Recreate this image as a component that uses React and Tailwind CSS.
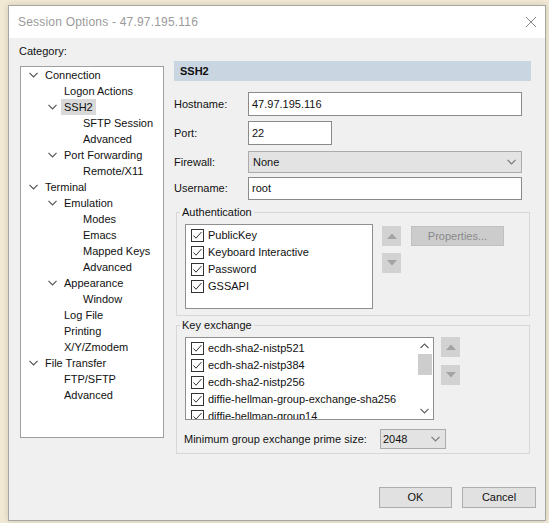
import React from "react";

const tree = [
  [0, "Connection", true],
  [1, "Logon Actions"],
  [1, "SSH2", true, true],
  [2, "SFTP Session"],
  [2, "Advanced"],
  [1, "Port Forwarding", true],
  [2, "Remote/X11"],
  [0, "Terminal", true],
  [1, "Emulation", true],
  [2, "Modes"],
  [2, "Emacs"],
  [2, "Mapped Keys"],
  [2, "Advanced"],
  [1, "Appearance", true],
  [2, "Window"],
  [1, "Log File"],
  [1, "Printing"],
  [1, "X/Y/Zmodem"],
  [0, "File Transfer", true],
  [1, "FTP/SFTP"],
  [1, "Advanced"],
];

const indent = ["pl-[8px]", "pl-[27px]", "pl-[46px]"];

function Chevron({ color = "#555" }) {
  return (
    <svg width="9" height="6" viewBox="0 0 9 6">
      <polyline points="0.5,0.8 4.5,4.8 8.5,0.8" fill="none" stroke={color} strokeWidth="1.2" />
    </svg>
  );
}

function Check() {
  return (
    <svg width="13" height="13" viewBox="0 0 13 13" className="shrink-0">
      <rect x="0.5" y="0.5" width="12" height="12" fill="#fff" stroke="#333" />
      <polyline points="2.5,6.5 5,9.2 10.5,3" fill="none" stroke="#333" strokeWidth="1" />
    </svg>
  );
}

function Row({ label }) {
  return (
    <div className="flex items-center h-[17px] pl-[5px] gap-[4px] whitespace-nowrap">
      <Check />
      <span>{label}</span>
    </div>
  );
}

function ArrowBtn({ up }) {
  return (
    <div className="w-[19px] h-[20px] bg-[#d2d2d2] flex items-center justify-center">
      <svg width="10" height="6" viewBox="0 0 10 6">
        {up ? (
          <polygon points="0,6 5,0.5 10,6" fill="#a3a3a3" />
        ) : (
          <polygon points="0,0 5,5.5 10,0" fill="#a3a3a3" />
        )}
      </svg>
    </div>
  );
}

function Input({ value, w }) {
  return (
    <div className={`${w} h-full bg-white border border-[#8a8a8a] flex items-center pl-[3px]`}>
      {value}
    </div>
  );
}

export default function App() {
  return (
    <div className="w-[549px] h-[523px] bg-[#f1e9d3] pt-[5px] pl-[8px] font-['Liberation_Sans',Arial,sans-serif] text-[11px] text-[#111]">
      <div className="w-[538px] h-[516px] border border-[#a6a6a6] flex flex-col shadow-[0_0_6px_rgba(0,0,0,0.15)]">
        {/* title bar */}
        <div className="h-[32px] bg-white flex items-center justify-between pl-[9px] pr-[8px]">
          <span className="text-[12px] text-[#9b9b9b] tracking-[0.2px]">Session Options - 47.97.195.116</span>
          <svg width="12" height="12" viewBox="0 0 12 12">
            <path d="M1 1 L11 11 M11 1 L1 11" stroke="#8c8c8c" strokeWidth="1" />
          </svg>
        </div>
        {/* body */}
        <div className="flex-1 bg-[#f0f0f0] flex flex-col pl-[10px] pr-[9px] pb-[12px]">
          <div className="flex items-start">
            {/* left */}
            <div className="w-[145px] pt-[5px] flex flex-col">
              <div className="h-[16px] leading-[16px]">Category:</div>
              <div className="mt-[7px] ml-[1px] w-[144px] h-[372px] bg-white border border-[#a0a0a0]">
                {tree.map(([lvl, label, exp, sel], i) => (
                  <div key={i} className={`flex items-center h-[16px] whitespace-nowrap ${indent[lvl]}`}>
                    <span className="w-[16px] flex items-center">{exp && <Chevron />}</span>
                    <span className={sel ? "bg-[#d9d9d9] px-[3px] -ml-[3px] leading-[16px]" : "leading-[16px]"}>{label}</span>
                  </div>
                ))}
              </div>
            </div>
            {/* right */}
            <div className="ml-[10px] pt-[23px] w-[357px] flex flex-col">
              <div className="h-[20px] bg-[#c9d6e1] flex items-center pl-[6px] font-bold">SSH2</div>
              <div className="mt-[11px] flex items-center h-[24px]">
                <span className="w-[74px]">Hostname:</span>
                <Input value="47.97.195.116" w="w-[274px]" />
              </div>
              <div className="mt-[5px] flex items-center h-[24px]">
                <span className="w-[74px]">Port:</span>
                <Input value="22" w="w-[84px]" />
              </div>
              <div className="mt-[6px] flex items-center h-[22px]">
                <span className="w-[74px]">Firewall:</span>
                <div className="w-[274px] h-full bg-[#e3e3e3] border border-[#ababab] flex items-center justify-between pl-[4px] pr-[5px]">
                  <span>None</span>
                  <Chevron color="#7a7a7a" />
                </div>
              </div>
              <div className="mt-[4px] flex items-center h-[23px]">
                <span className="w-[74px]">Username:</span>
                <Input value="root" w="w-[274px]" />
              </div>

              <fieldset className="mt-[4px] ml-[2px] w-[354px] border border-[#d7d7d7]">
                <legend className="ml-[3px] px-[2px] leading-[16px]">Authentication</legend>
                <div className="flex items-start pl-[8px] pt-[4px] pb-[6px]">
                  <div className="w-[188px] h-[85px] bg-white border border-[#8f8f8f] pt-[2px]">
                    <Row label="PublicKey" />
                    <Row label="Keyboard Interactive" />
                    <Row label="Password" />
                    <Row label="GSSAPI" />
                  </div>
                  <div className="ml-[9px] mt-[2px] flex flex-col gap-[7px]">
                    <ArrowBtn up />
                    <ArrowBtn />
                  </div>
                  <div className="ml-[10px] mt-[2px] w-[93px] h-[20px] bg-[#cccccc] border border-[#c0c0c0] flex items-center justify-center text-[#8a8a8a]">
                    Properties...
                  </div>
                </div>
              </fieldset>

              <fieldset className="mt-[1px] ml-[2px] w-[354px] border border-[#d7d7d7]">
                <legend className="ml-[3px] px-[2px] leading-[16px]">Key exchange</legend>
                <div className="flex flex-col pl-[8px] pt-[4px] pb-[4px]">
                  <div className="flex items-start">
                    <div className="w-[249px] h-[83px] bg-white border border-[#8f8f8f] flex">
                      <div className="flex-1 overflow-hidden pt-[2px]">
                        <Row label="ecdh-sha2-nistp521" />
                        <Row label="ecdh-sha2-nistp384" />
                        <Row label="ecdh-sha2-nistp256" />
                        <Row label="diffie-hellman-group-exchange-sha256" />
                        <Row label="diffie-hellman-group14" />
                      </div>
                      <div className="w-[17px] flex flex-col items-center">
                        <div className="h-[16px] flex items-center justify-center">
                          <svg width="9" height="6" viewBox="0 0 9 6">
                            <polyline points="0.5,5 4.5,1 8.5,5" fill="none" stroke="#606060" strokeWidth="1.2" />
                          </svg>
                        </div>
                        <div className="w-[14px] h-[21px] bg-[#cdcdcd]" />
                        <div className="flex-1" />
                        <div className="h-[16px] flex items-center justify-center">
                          <Chevron color="#606060" />
                        </div>
                      </div>
                    </div>
                    <div className="ml-[7px] flex flex-col gap-[8px]">
                      <ArrowBtn up />
                      <ArrowBtn />
                    </div>
                  </div>
                  <div className="mt-[9px] flex items-center h-[20px]">
                    <span className="w-[196px] -ml-[1px]">Minimum group exchange prime size:</span>
                    <div className="w-[66px] h-full bg-[#e3e3e3] border border-[#ababab] flex items-center justify-between pl-[2px] pr-[5px]">
                      <span>2048</span>
                      <Chevron color="#7a7a7a" />
                    </div>
                  </div>
                </div>
              </fieldset>
            </div>
          </div>
          <div className="mt-auto flex justify-end gap-[10px]">
            <div className="w-[73px] h-[21px] bg-[#e1e1e1] border border-[#adadad] flex items-center justify-center">OK</div>
            <div className="w-[74px] h-[21px] bg-[#e1e1e1] border border-[#adadad] flex items-center justify-center">Cancel</div>
          </div>
        </div>
      </div>
    </div>
  );
}
